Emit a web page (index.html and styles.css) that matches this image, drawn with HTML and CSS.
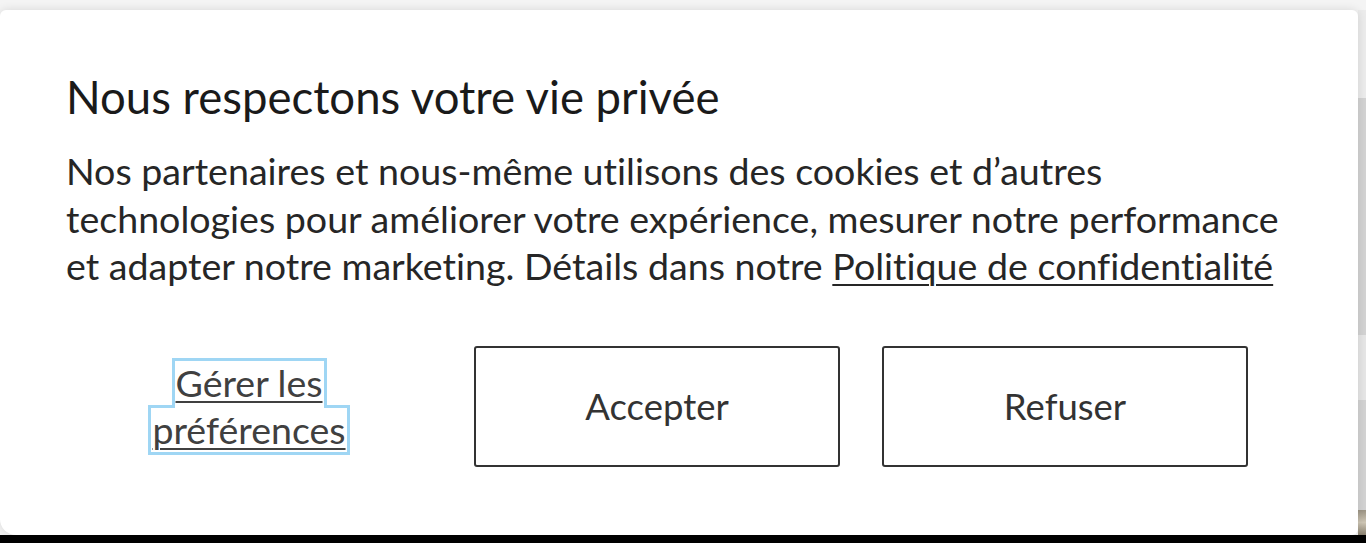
FILE: index.html
```html
<!DOCTYPE html>
<html lang="fr">
    <head>
        <meta charset="UTF-8" />
        <meta name="viewport" content="width=device-width, initial-scale=1.0" />
        <title>Vie privée</title>
        <link rel="stylesheet" href="styles.css">
    </head>
    <body>
        <div class="top-strip"></div>
        <div class="stage">
            <section class="consent">
                <h1>Nous respectons votre vie privée</h1>
                <p>Nos partenaires et nous-même utilisons des cookies et d’autres technologies pour améliorer votre expérience, mesurer notre performance et adapter notre marketing. Détails dans notre <a href="#">Politique de confidentialité</a></p>
                <div class="actions">
                    <div class="prefs">
                        <a href="#" class="prefs-link">
                            <span class="prefs-line first">Gérer les</span>
                            <span class="prefs-line">préférences</span>
                        </a>
                    </div>
                    <button class="choice">Accepter</button>
                    <button class="choice">Refuser</button>
                </div>
            </section>
            <div class="side">
                <div class="side-light"></div>
                <div class="side-grey"></div>
                <div class="side-light2"></div>
                <div class="side-grey2"></div>
                <div class="side-photo"></div>
            </div>
        </div>
        <div class="bottom-strip"></div>
    </body>
</html>
```

FILE: styles.css
```css
body {
    margin: 0;
    height: 543px;
    overflow: hidden;
    display: flex;
    flex-direction: column;
    background-color: #f4f4f4;
    font-family: Lato, "Open Sans", sans-serif;
    font-variant-ligatures: none;
}

.top-strip {
    height: 10px;
    flex: none;
}

.stage {
    flex: 1;
    display: flex;
}

.bottom-strip {
    height: 8px;
    flex: none;
    background-color: #000;
}

.consent {
    flex: 1;
    background-color: #fff;
    border-radius: 6px 6px 6px 16px;
    box-shadow: 0 0 10px rgba(0, 0, 0, 0.12);
    padding: 60px 66px 0 66px;
    position: relative;
    z-index: 1;
}

.side {
    width: 8px;
    display: flex;
    flex-direction: column;
}

.side-light {
    height: 88px;
    background-color: #ececec;
}

.side-grey {
    height: 237px;
    background-color: #d3d3d3;
}

.side-light2 {
    height: 65px;
    background-color: #e6e6e6;
}

.side-grey2 {
    flex: 1;
    background-color: #d3d3d3;
}

.side-photo {
    height: 25px;
    background: linear-gradient(#9c9484, #cfc7b6, #8a8170);
}

h1 {
    margin: 0;
    font-size: 45.5px;
    font-weight: 400;
    line-height: 54px;
    color: #1a1a1a;
}

p {
    margin: 23px 0 0 0;
    max-width: 1240px;
    font-size: 37.6px;
    line-height: 47.5px;
    color: #262626;
}

p a {
    color: #262626;
    text-decoration: underline;
    text-underline-offset: 4px;
    text-decoration-thickness: 2px;
}

.actions {
    margin-top: 56px;
    width: 1182px;
    display: grid;
    grid-template-columns: repeat(3, 1fr);
    gap: 42px;
}

.prefs {
    display: flex;
    align-items: center;
    justify-content: center;
}

.prefs-link {
    display: flex;
    flex-direction: column;
    align-items: center;
    font-size: 37.5px;
    line-height: 44px;
    color: #404040;
    text-decoration: none;
}

.prefs-line {
    display: block;
    padding: 0 1px;
    background-color: #fff;
    border: 3px solid #9fd6f4;
    text-decoration: underline;
    text-decoration-thickness: 2px;
    text-underline-offset: 4px;
}

.prefs-line.first {
    border-bottom: none;
    padding-bottom: 3px;
    margin-bottom: -3px;
    position: relative;
    z-index: 1;
}

.choice {
    height: 121px;
    background-color: #fff;
    border: 2px solid #333;
    border-radius: 3px;
    font-family: Lato, "Open Sans", sans-serif;
    font-size: 36.5px;
    color: #333;
    cursor: pointer;
}
```
